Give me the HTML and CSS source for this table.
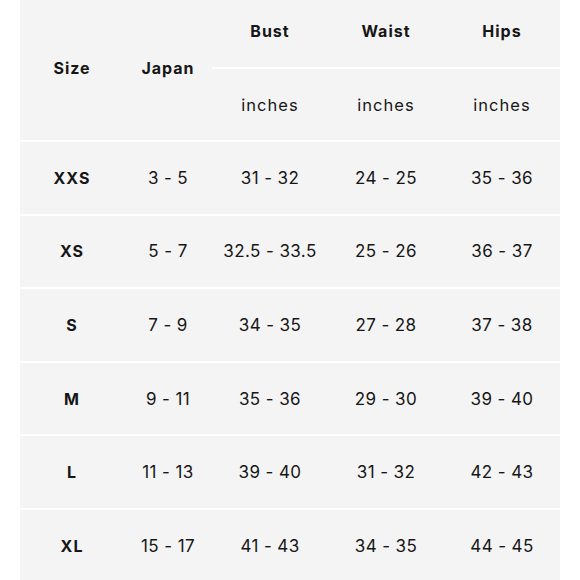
FILE: index.html
```html
<!DOCTYPE html>
<html>
<head>
<meta charset="utf-8">
<link rel="stylesheet" href="styles.css">
</head>
<body>
<table class="chart">
  <colgroup>
    <col class="c-size"><col class="c-japan"><col class="c-m"><col class="c-m"><col class="c-m">
  </colgroup>
  <thead>
    <tr class="h1">
      <th rowspan="2" class="span">Size</th>
      <th rowspan="2" class="span">Japan</th>
      <th>Bust</th>
      <th>Waist</th>
      <th>Hips</th>
    </tr>
    <tr class="h2">
      <td>inches</td>
      <td>inches</td>
      <td>inches</td>
    </tr>
  </thead>
  <tbody>
    <tr><th>XXS</th><td>3 - 5</td><td>31 - 32</td><td>24 - 25</td><td>35 - 36</td></tr>
    <tr><th>XS</th><td>5 - 7</td><td>32.5 - 33.5</td><td>25 - 26</td><td>36 - 37</td></tr>
    <tr><th>S</th><td>7 - 9</td><td>34 - 35</td><td>27 - 28</td><td>37 - 38</td></tr>
    <tr><th>M</th><td>9 - 11</td><td>35 - 36</td><td>29 - 30</td><td>39 - 40</td></tr>
    <tr><th>L</th><td>11 - 13</td><td>39 - 40</td><td>31 - 32</td><td>42 - 43</td></tr>
    <tr><th>XL</th><td>15 - 17</td><td>41 - 43</td><td>34 - 35</td><td>44 - 45</td></tr>
  </tbody>
</table>
</body>
</html>
```
FILE: styles.css
```css
html, body {
  margin: 0;
  padding: 0;
  background: #ffffff;
}
body {
  font-family: "Inter", "Liberation Sans", sans-serif;
  color: #161616;
}
.chart {
  margin-left: 20px;
  width: 540px;
  border-collapse: collapse;
  table-layout: fixed;
}
.c-size { width: 104px; }
.c-japan { width: 88px; }
.c-m { width: 116px; }
.chart th, .chart td {
  background: #f4f4f4;
  text-align: center;
  vertical-align: middle;
  padding: 0;
  border-bottom: 2px solid #ffffff;
}
.chart th {
  font-size: 16px;
  font-weight: 700;
  letter-spacing: 1px;
}
.chart td {
  font-size: 17px;
  font-weight: 400;
  letter-spacing: 0.4px;
}
.h1 th { height: 68px; padding-bottom: 6px; box-sizing: border-box; }
.h1 th.span { padding-bottom: 4px; }
.h2 td { height: 71px; letter-spacing: 1px; font-size: 16.5px; }
.chart tbody th, .chart tbody td { height: 71.6px; }
```
